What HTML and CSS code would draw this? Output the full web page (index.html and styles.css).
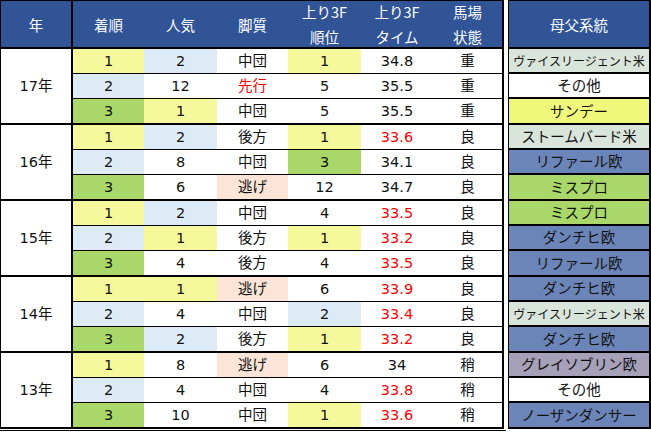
FILE: index.html
```html
<!DOCTYPE html>
<html lang="ja">
<head>
<meta charset="utf-8">
<title>母父系統</title>
<link rel="stylesheet" href="styles.css">
</head>
<body>
<div class="page">
  <div class="left-wrap">
    <div class="main">
      <div class="h yr">年</div>
      <div class="h">着順</div>
      <div class="h">人気</div>
      <div class="h">脚質</div>
      <div class="h two"><span>上り3F</span><span>順位</span></div>
      <div class="h two"><span>上り3F</span><span>タイム</span></div>
      <div class="h two"><span>馬場</span><span>状態</span></div>

      <div class="c yr">17年</div>
      <div class="c y">1</div><div class="c lb">2</div><div class="c">中団</div><div class="c y">1</div><div class="c">34.8</div><div class="c">重</div>
      <div class="c lb">2</div><div class="c">12</div><div class="c red">先行</div><div class="c">5</div><div class="c">35.5</div><div class="c">重</div>
      <div class="c g e">3</div><div class="c y e">1</div><div class="c e">中団</div><div class="c e">5</div><div class="c e">35.5</div><div class="c e">重</div>

      <div class="c yr">16年</div>
      <div class="c y">1</div><div class="c lb">2</div><div class="c">後方</div><div class="c y">1</div><div class="c red">33.6</div><div class="c">良</div>
      <div class="c lb">2</div><div class="c">8</div><div class="c">中団</div><div class="c g">3</div><div class="c">34.1</div><div class="c">良</div>
      <div class="c g e">3</div><div class="c e">6</div><div class="c pk e">逃げ</div><div class="c e">12</div><div class="c e">34.7</div><div class="c e">良</div>

      <div class="c yr">15年</div>
      <div class="c y">1</div><div class="c lb">2</div><div class="c">中団</div><div class="c">4</div><div class="c red">33.5</div><div class="c">良</div>
      <div class="c lb">2</div><div class="c y">1</div><div class="c">後方</div><div class="c y">1</div><div class="c red">33.2</div><div class="c">良</div>
      <div class="c g e">3</div><div class="c e">4</div><div class="c e">後方</div><div class="c e">4</div><div class="c red e">33.5</div><div class="c e">良</div>

      <div class="c yr">14年</div>
      <div class="c y">1</div><div class="c y">1</div><div class="c pk">逃げ</div><div class="c">6</div><div class="c red">33.9</div><div class="c">良</div>
      <div class="c lb">2</div><div class="c">4</div><div class="c">中団</div><div class="c lb">2</div><div class="c red">33.4</div><div class="c">良</div>
      <div class="c g e">3</div><div class="c lb e">2</div><div class="c e">後方</div><div class="c y e">1</div><div class="c red e">33.2</div><div class="c e">良</div>

      <div class="c yr">13年</div>
      <div class="c y">1</div><div class="c">8</div><div class="c pk">逃げ</div><div class="c">6</div><div class="c">34</div><div class="c">稍</div>
      <div class="c lb">2</div><div class="c">4</div><div class="c">中団</div><div class="c">4</div><div class="c red">33.8</div><div class="c">稍</div>
      <div class="c g e">3</div><div class="c e">10</div><div class="c e">中団</div><div class="c y e">1</div><div class="c red e">33.6</div><div class="c e">稍</div>
    </div>
  </div>

  <div class="side">
    <div class="sh">母父系統</div>
    <div class="s gg small">ヴァイスリージェント米</div>
    <div class="s">その他</div>
    <div class="s sy e">サンデー</div>
    <div class="s gg">ストームバード米</div>
    <div class="s bl">リファール欧</div>
    <div class="s sg e">ミスプロ</div>
    <div class="s sg">ミスプロ</div>
    <div class="s bl">ダンチヒ欧</div>
    <div class="s bl e">リファール欧</div>
    <div class="s bl">ダンチヒ欧</div>
    <div class="s gg small">ヴァイスリージェント米</div>
    <div class="s bl e">ダンチヒ欧</div>
    <div class="s mv">グレイソブリン欧</div>
    <div class="s">その他</div>
    <div class="s bl e">ノーザンダンサー</div>
  </div>
</div>
</body>
</html>
```

FILE: styles.css
```css
html, body {
  margin: 0;
  padding: 0;
  background: #ffffff;
}

body {
  font-family: "DejaVu Sans", "Noto Sans CJK JP", sans-serif;
  font-size: 14.5px;
  color: #111111;
}

.page {
  display: flex;
  align-items: flex-start;
  gap: 2px;
}

.left-wrap {
  width: 506px;
  padding-bottom: 1px;
  border-bottom: 1px solid #000;
}

.main {
  display: grid;
  width: 501px;
  grid-template-columns: 72px 71px 73px 71px 73px 72px 69px;
  grid-template-rows: 48px repeat(5, 25px 25px 26px);
  border-top: 1px solid #000;
  border-left: 1px solid #000;
  border-right: 2px solid #000;
}

.h {
  box-sizing: border-box;
  background: #305496;
  color: #ffffff;
  border-bottom: 2px solid #000;
  display: flex;
  align-items: center;
  justify-content: center;
  font-family: "Noto Sans CJK JP", sans-serif;
}

.h.two {
  flex-direction: column;
  line-height: 25px;
}

.h.yr {
  border-right: 2px solid #000;
}

.c {
  box-sizing: border-box;
  border-bottom: 1px solid #000;
  display: flex;
  align-items: center;
  justify-content: center;
  background: #ffffff;
  line-height: 1;
}

.c.e {
  border-bottom-width: 2px;
}

.c.yr {
  grid-row: span 3;
  border-right: 2px solid #000;
  border-bottom-width: 2px;
}

.c.y { background: #f6f99b; }
.c.lb { background: #ddebf7; }
.c.g { background: #a9d76a; }
.c.pk { background: #fce4d6; }
.c.red { color: #ff0000; }

.side {
  display: grid;
  width: 140px;
  grid-template-rows: 48px repeat(5, 25px 25px 26px);
  border-top: 1px solid #000;
  border-left: 1px solid #000;
  border-right: 2px solid #000;
  font-family: "Noto Sans CJK JP", sans-serif;
}

.sh {
  background: #305496;
  color: #ffffff;
  border-bottom: 2px solid #000;
  display: flex;
  align-items: center;
  justify-content: center;
}

.s {
  box-sizing: border-box;
  border-bottom: 2px solid #000;
  display: flex;
  align-items: center;
  justify-content: center;
  background: #ffffff;
  line-height: 1;
  white-space: nowrap;
}

.s.small {
  font-size: 12px;
}

.s.gg { background: #d9e4da; }
.s.bl { background: #6b85b8; }
.s.sy { background: #f0f87b; }
.s.sg { background: #a9d76a; }
.s.mv { background: #a6a0b8; }
```
